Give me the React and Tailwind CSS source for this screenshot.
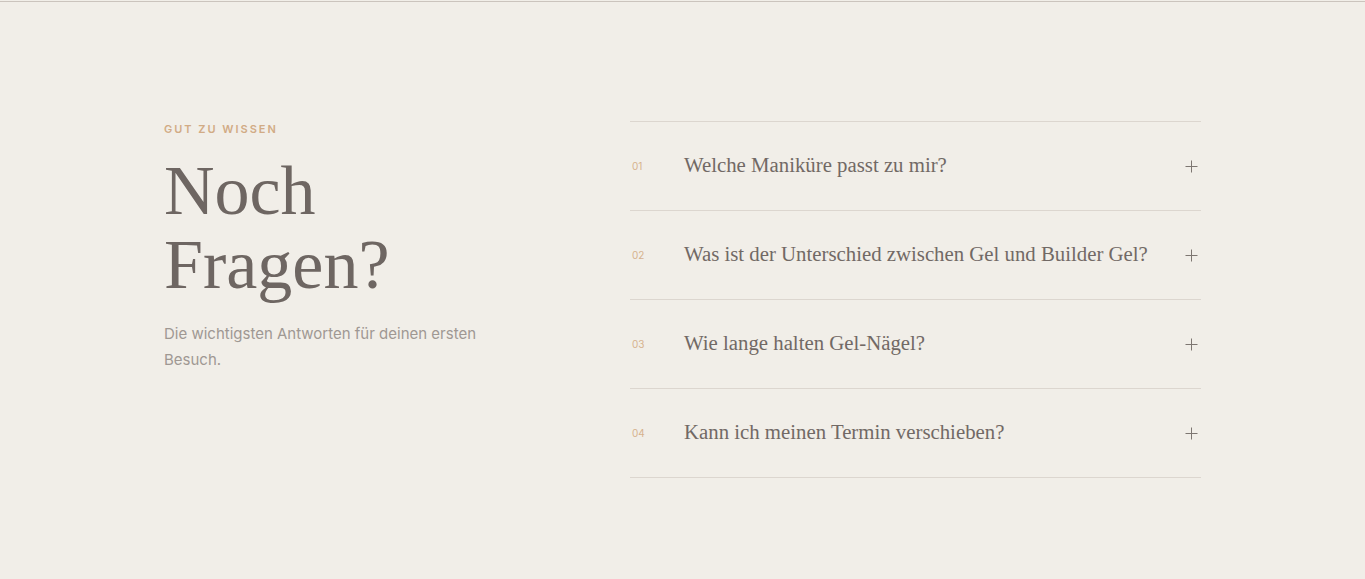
import React from "react";

const faqs = [
  { n: "01", q: "Welche Maniküre passt zu mir?" },
  { n: "02", q: "Was ist der Unterschied zwischen Gel und Builder Gel?" },
  { n: "03", q: "Wie lange halten Gel-Nägel?" },
  { n: "04", q: "Kann ich meinen Termin verschieben?" },
];

function Plus() {
  return (
    <svg width="13" height="13" viewBox="0 0 13 13" className="shrink-0">
      <path d="M6.5 0.5V12.5M0.5 6.5H12.5" stroke="#7d7671" strokeWidth="1" fill="none" />
    </svg>
  );
}

export default function App() {
  return (
    <div className="min-h-[579px] bg-[#f1eee8]">
      <div className="h-px bg-[#f1eee8]" />
      <div className="h-px bg-[#cbc4bd]" />
      <section className="mx-auto w-[1037px] pt-[119px] pb-[101px] flex justify-between">
        <div className="w-[360px]">
          <p className="mt-px text-[11px] leading-[14px] tracking-[0.18em] font-semibold text-[#d1ab85] font-['Inter',sans-serif]">
            GUT ZU WISSEN
          </p>
          <h2 className="mt-[18px] text-[70px] leading-[74px] text-[#6e6662] font-['Liberation_Serif',serif] font-normal">
            Noch
            <br />
            Fragen?
          </h2>
          <p className="mt-[19px] w-[330px] text-[15px] leading-[26px] text-[#9f9893] font-['Inter',sans-serif]">
            Die wichtigsten Antworten für deinen ersten Besuch.
          </p>
        </div>
        <div className="w-[571px] border-b border-[#dcd6cf]">
          {faqs.map((f) => (
            <div
              key={f.n}
              className="h-[89px] border-t border-[#dcd6cf] flex items-center pl-[2px] pr-[3px]"
            >
              <span className="w-[52px] shrink-0 text-[10px] text-[#d6b28e] font-['Inter',sans-serif]">
                {f.n}
              </span>
              <span className="flex-1 -mt-[2px] text-[20.8px] text-[#716965] font-['Liberation_Serif',serif]">
                {f.q}
              </span>
              <Plus />
            </div>
          ))}
        </div>
      </section>
    </div>
  );
}
